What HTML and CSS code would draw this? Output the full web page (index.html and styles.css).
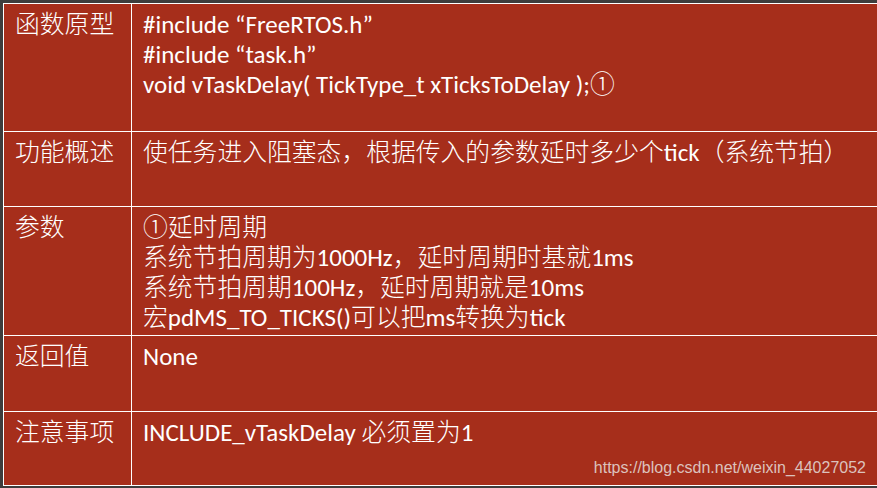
FILE: index.html
```html
<!DOCTYPE html>
<html lang="zh-CN">
<head>
<meta charset="utf-8">
<title>vTaskDelay</title>
<link rel="stylesheet" href="styles.css">
</head>
<body>
<div class="sheet">
  <div class="grid">
    <div class="cell head">函数原型</div>
    <div class="cell body">
      <div class="line"><span class="en">#include “FreeRTOS.h”</span></div>
      <div class="line"><span class="en">#include “task.h”</span></div>
      <div class="line"><span class="en">void vTaskDelay( TickType_t xTicksToDelay );</span><span class="circ">①</span></div>
    </div>
    <div class="cell head">功能概述</div>
    <div class="cell body">
      <div class="line">使任务进入阻塞态，根据传入的参数延时多少个<span class="en">tick</span>（系统节拍）</div>
    </div>
    <div class="cell head">参数</div>
    <div class="cell body">
      <div class="line"><span class="circ">①</span>延时周期</div>
      <div class="line">系统节拍周期为<span class="en">1000Hz</span>，延时周期时基就<span class="en">1ms</span></div>
      <div class="line">系统节拍周期<span class="en">100Hz</span>，延时周期就是<span class="en">10ms</span></div>
      <div class="line">宏<span class="en">pdMS_TO_TICKS()</span>可以把<span class="en">ms</span>转换为<span class="en">tick</span></div>
    </div>
    <div class="cell head">返回值</div>
    <div class="cell body">
      <div class="line"><span class="en">None</span></div>
    </div>
    <div class="cell head">注意事项</div>
    <div class="cell body">
      <div class="line"><span class="en">INCLUDE_vTaskDelay </span>必须置为<span class="en">1</span></div>
    </div>
  </div>
  <div class="watermark">https://blog.csdn.net/weixin_44027052</div>
</div>
</body>
</html>
```

FILE: styles.css
```css
html, body {
  margin: 0;
  padding: 0;
}
body {
  background: #3d3d3d;
  width: 877px;
  height: 488px;
  overflow: hidden;
}
.sheet {
  position: relative;
  width: 877px;
  height: 488px;
  padding: 3px 0 0 3px;
  box-sizing: border-box;
}
.grid {
  display: grid;
  grid-template-columns: 127px 1fr;
  grid-template-rows: 127px 74px 128px 75px 73px;
  gap: 1px;
  background: #ffffff;
  border: 1px solid #ffffff;
  width: 890px;
  box-sizing: content-box;
  font-family: "Noto Sans CJK SC", sans-serif;
  font-weight: 300;
  font-size: 24.8px;
  line-height: 30px;
  color: #ffffff;
}
.cell {
  background: #a62e1b;
  padding-top: 3px;
}
.head {
  padding-left: 11px;
}
.body {
  padding-left: 11px;
}
.line {
  white-space: nowrap;
  height: 30px;
  line-height: 30px;
}
.en {
  font-family: Carlito, Lato, sans-serif;
  font-weight: 400;
  font-size: 25px;
  line-height: 1;
}
.circ {
  line-height: 1;
}
.watermark {
  position: absolute;
  right: 11px;
  top: 458px;
  font-family: "Liberation Sans", Arial, sans-serif;
  font-size: 16px;
  line-height: 20px;
  color: #dcc2bd;
}
```
